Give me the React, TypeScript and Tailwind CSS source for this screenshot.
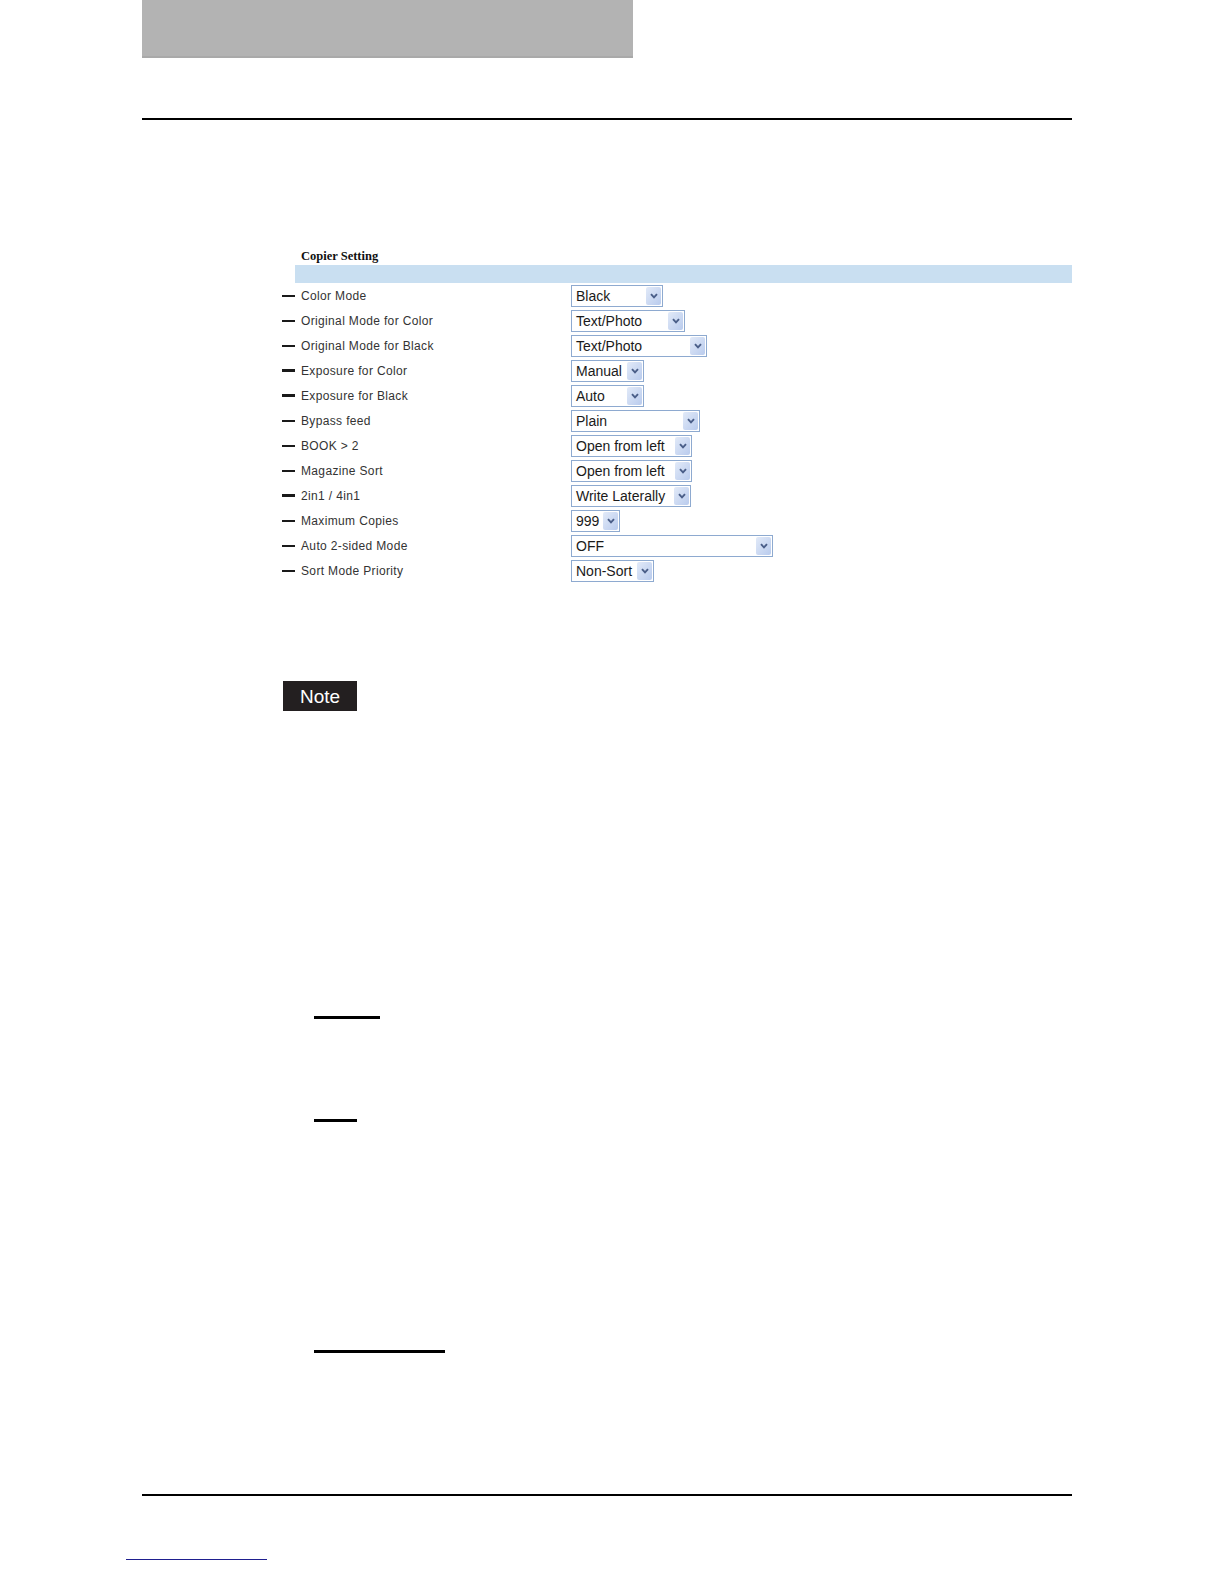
import React from 'react';

interface SettingRow {
  label: string;
  value: string;
  width: number;
  thick?: boolean;
}

const ROWS: SettingRow[] = [
  { label: 'Color Mode', value: 'Black', width: 92 },
  { label: 'Original Mode for Color', value: 'Text/Photo', width: 114 },
  { label: 'Original Mode for Black', value: 'Text/Photo', width: 136 },
  { label: 'Exposure for Color', value: 'Manual', width: 73, thick: true },
  { label: 'Exposure for Black', value: 'Auto', width: 73, thick: true },
  { label: 'Bypass feed', value: 'Plain', width: 129 },
  { label: 'BOOK > 2', value: 'Open from left', width: 121 },
  { label: 'Magazine Sort', value: 'Open from left', width: 121 },
  { label: '2in1 / 4in1', value: 'Write Laterally', width: 120, thick: true },
  { label: 'Maximum Copies', value: '999', width: 49 },
  { label: 'Auto 2-sided Mode', value: 'OFF', width: 202 },
  { label: 'Sort Mode Priority', value: 'Non-Sort', width: 83 },
];

const FakeSelect: React.FC<{ value: string; width: number }> = ({ value, width }) => (
  <div
    className="flex items-center h-[22px] border border-[#8eaad0] bg-white"
    style={{ width }}
  >
    <span className="flex-1 pl-[4px] text-[14px] leading-[20px] text-[#1a1a1a] whitespace-nowrap overflow-hidden font-['Liberation_Sans',Arial,sans-serif]">
      {value}
    </span>
    <span className="flex items-center justify-center w-[15px] h-[18px] mr-[1px] rounded-[2px] bg-gradient-to-br from-[#e2eaf8] to-[#b9cbed]">
      <svg width="8" height="6" viewBox="0 0 8 6">
        <path d="M1 1.2 L4 4.4 L7 1.2" fill="none" stroke="#4a5e88" strokeWidth="1.9" />
      </svg>
    </span>
  </div>
);

export default function App() {
  return (
    <div className="w-[1224px] h-[1584px] bg-white flex flex-col font-['Liberation_Sans',Arial,sans-serif]">
      {/* header tab */}
      <div className="ml-[142px] w-[491px] h-[58px] bg-[#b3b3b3] border-b-2 border-[#a9a9a9]" />
      <div className="ml-[142px] mt-[60px] w-[930px] h-[2px] bg-black" />

      {/* Copier Setting panel */}
      <div className="mt-[128px] ml-[301px] h-[17px] text-[12.5px] leading-[17px] font-bold text-[#111] font-['Liberation_Serif','Times_New_Roman',serif]">
        Copier Setting
      </div>
      <div className="ml-[295px] w-[777px] h-[18px] bg-[#c9dff1]" />

      <div className="flex flex-col">
        {ROWS.map(row => (
          <div key={row.label} className="flex items-center h-[25px]">
            <div className={`ml-[282px] w-[13px] bg-[#1a1a1a] ${row.thick ? 'h-[3px]' : 'h-[2px]'}`} />
            <div className="ml-[6px] w-[270px] text-[12px] tracking-[0.35px] text-[#333] whitespace-nowrap">
              {row.label}
            </div>
            <FakeSelect value={row.value} width={row.width} />
          </div>
        ))}
      </div>

      {/* Note badge */}
      <div className="mt-[98px] ml-[283px] w-[74px] h-[30px] bg-[#231f20] flex items-center justify-center">
        <span className="text-white text-[19px] leading-none">Note</span>
      </div>

      <div className="mt-[305px] ml-[314px] w-[66px] h-[3px] bg-black" />
      <div className="mt-[100px] ml-[314px] w-[43px] h-[3px] bg-black" />
      <div className="mt-[228px] ml-[314px] w-[131px] h-[3px] bg-black" />

      {/* footer */}
      <div className="mt-[141px] ml-[142px] w-[930px] h-[2px] bg-black" />
      <div className="mt-[63px] ml-[126px] w-[141px] h-[1px] bg-[#1f1f8f]" />
    </div>
  );
}
